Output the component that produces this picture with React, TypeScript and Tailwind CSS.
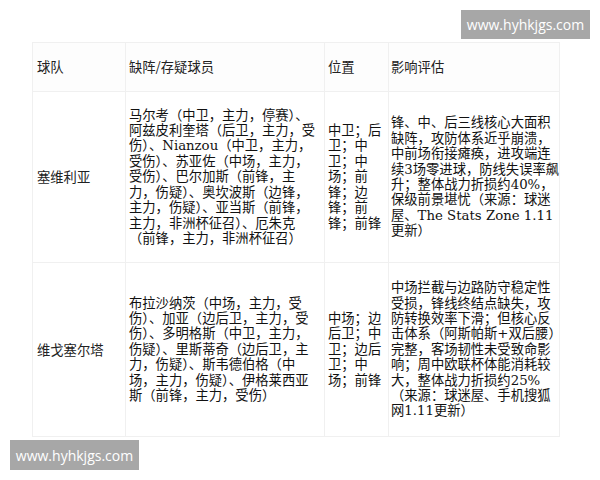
import React from "react";

type Row = {
  team: string;
  players: string[];
  pos: string[];
  impact: string[];
  h: string;
};

const rows: Row[] = [
  {
    team: "塞维利亚",
    h: "h-[171px]",
    players: [
      "马尔考（中卫，主力，停赛）、",
      "阿兹皮利奎塔（后卫，主力，受",
      "伤）、Nianzou（中卫，主力，",
      "受伤）、苏亚佐（中场，主力，",
      "受伤）、巴尔加斯（前锋，主",
      "力，伤疑）、奥坎波斯（边锋，",
      "主力，伤疑）、亚当斯（前锋，",
      "主力，非洲杯征召）、厄朱克",
      "（前锋，主力，非洲杯征召）",
    ],
    pos: ["中卫；后", "卫；中", "卫；中", "场；前", "锋；边", "锋；前", "锋；前锋"],
    impact: [
      "锋、中、后三线核心大面积",
      "缺阵，攻防体系近乎崩溃，",
      "中前场衔接瘫痪，进攻端连",
      "续3场零进球，防线失误率飙",
      "升；整体战力折损约40%，",
      "保级前景堪忧（来源：球迷",
      "屋、The Stats Zone 1.11",
      "更新）",
    ],
  },
  {
    team: "维戈塞尔塔",
    h: "h-[174px]",
    players: [
      "布拉沙纳茨（中场，主力，受",
      "伤）、加亚（边后卫，主力，受",
      "伤）、多明格斯（中卫，主力，",
      "伤疑）、里斯蒂奇（边后卫，主",
      "力，伤疑）、斯韦德伯格（中",
      "场，主力，伤疑）、伊格莱西亚",
      "斯（前锋，主力，受伤）",
    ],
    pos: ["中场；边", "后卫；中", "卫；边后", "卫；中", "场；前锋"],
    impact: [
      "中场拦截与边路防守稳定性",
      "受损，锋线终结点缺失，攻",
      "防转换效率下滑；但核心反",
      "击体系（阿斯帕斯+双后腰）",
      "完整，客场韧性未受致命影",
      "响；周中欧联杯体能消耗较",
      "大，整体战力折损约25%",
      "（来源：球迷屋、手机搜狐",
      "网1.11更新）",
    ],
  },
];

const sans = "font-['Noto_Sans_CJK_SC',sans-serif]";
const serif = "font-['DejaVu_Serif','Noto_Sans_CJK_SC',serif]";

const Lines = ({ lines }: { lines: string[] }) => (
  <div className="whitespace-nowrap">
    {lines.map((l, i) => (
      <div key={i}>{l}</div>
    ))}
  </div>
);

const Watermark = ({ className }: { className: string }) => (
  <div
    className={`absolute flex items-center justify-center bg-[#a7a7a7] text-white text-[14px] font-['Open_Sans',sans-serif] ${className}`}
  >
    www.hyhkjgs.com
  </div>
);

export default function App() {
  return (
    <div className="relative w-[600px] h-[480px] overflow-hidden bg-white text-[#111]">
      <div className="pt-[42px] pl-[32px]">
        <table className="table-fixed w-[527px] border-collapse text-[13.3px] leading-[15.4px]">
          <colgroup>
            <col className="w-[93px]" />
            <col className="w-[199px]" />
            <col className="w-[64px]" />
            <col className="w-[171px]" />
          </colgroup>
          <thead>
            <tr className={`h-[49px] bg-[#fdfdfd] text-[#222] ${sans}`}>
              <th className="border border-[#f0f0f0] px-[4px] text-left font-normal">球队</th>
              <th className="border border-[#f0f0f0] px-[3px] text-left font-normal">缺阵/存疑球员</th>
              <th className="border border-[#f0f0f0] px-[3px] text-left font-normal">位置</th>
              <th className="border border-[#f0f0f0] px-[2px] text-left font-normal">影响评估</th>
            </tr>
          </thead>
          <tbody>
            {rows.map((r) => (
              <tr key={r.team} className={r.h}>
                <td className={`border border-[#f0f0f0] px-[4px] align-middle text-[#222] ${sans}`}>{r.team}</td>
                <td className={`border border-[#f0f0f0] px-[3px] align-middle ${serif}`}>
                  <Lines lines={r.players} />
                </td>
                <td className={`border border-[#f0f0f0] px-[3px] align-middle ${serif}`}>
                  <Lines lines={r.pos} />
                </td>
                <td className={`border border-[#f0f0f0] px-[2px] align-middle ${serif}`}>
                  <Lines lines={r.impact} />
                </td>
              </tr>
            ))}
          </tbody>
        </table>
      </div>
      <Watermark className="left-[461px] top-[10px] w-[129px] h-[29px]" />
      <Watermark className="left-[10px] top-[440px] w-[129px] h-[30px]" />
    </div>
  );
}
